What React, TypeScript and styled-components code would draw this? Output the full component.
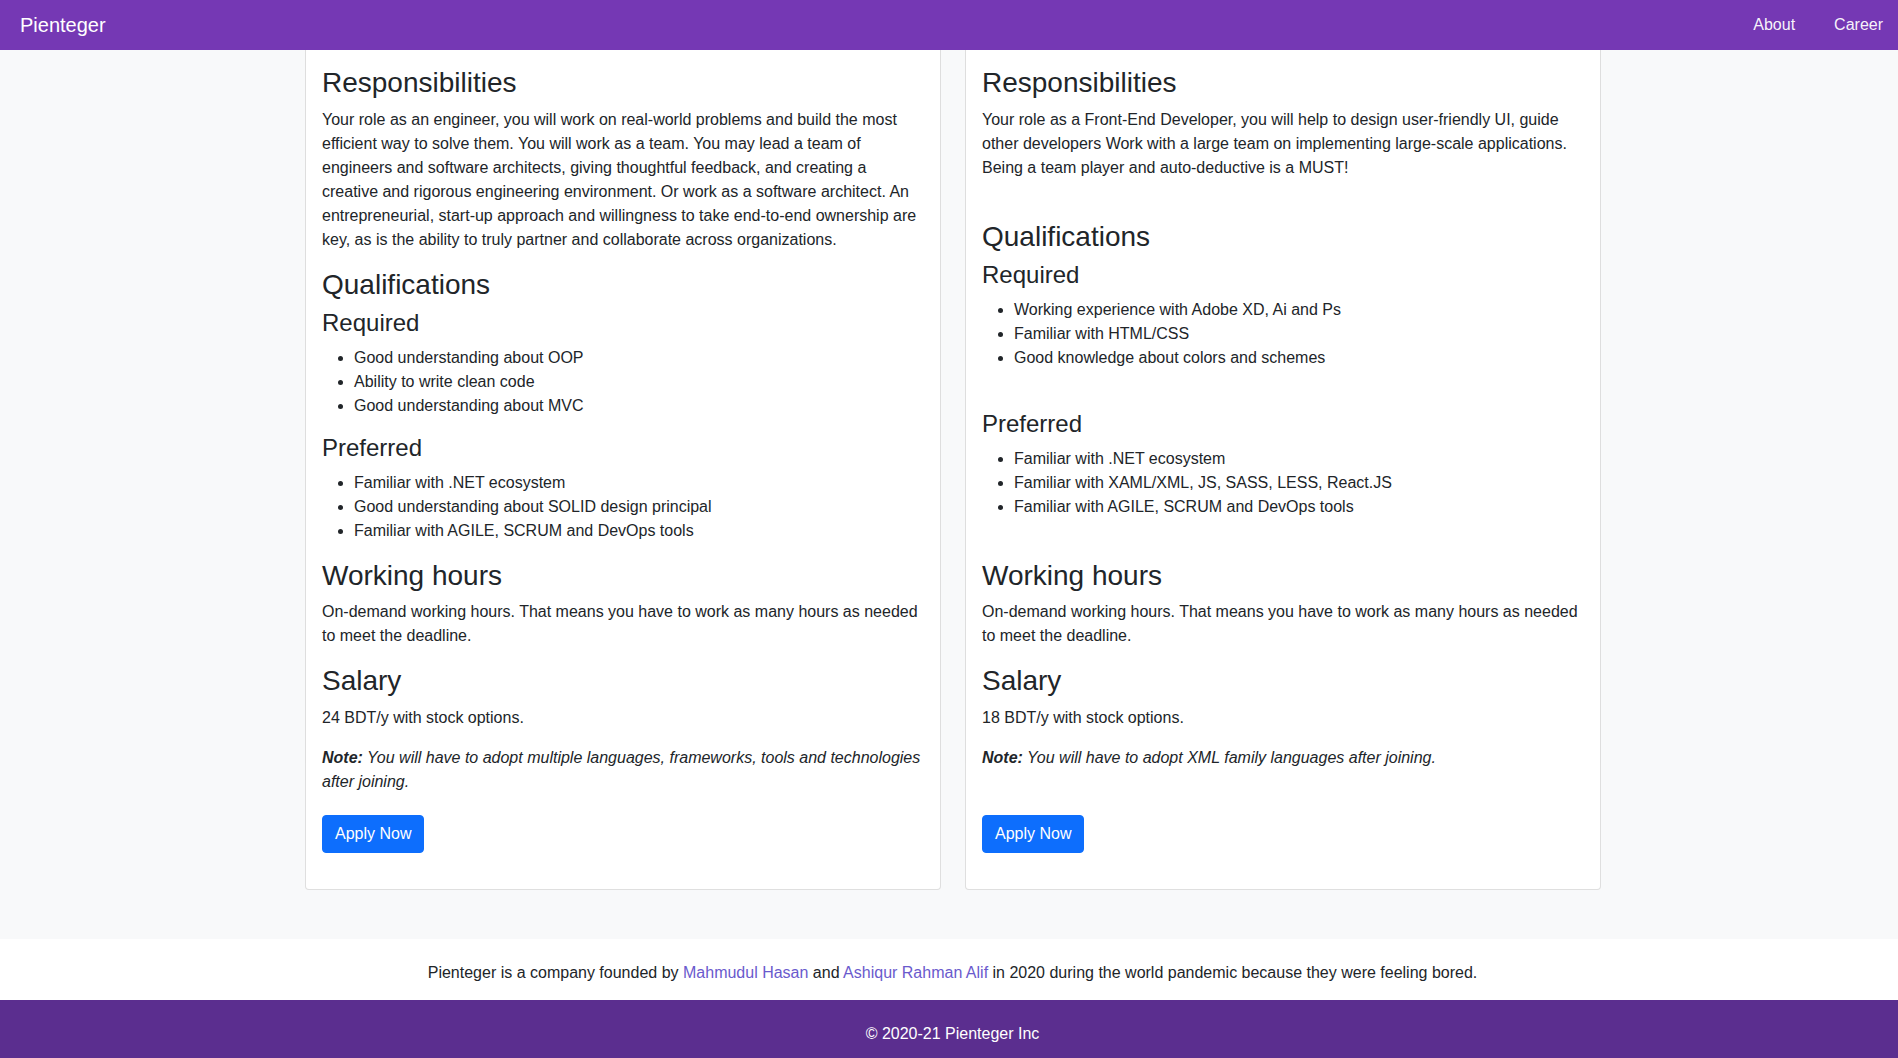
import React from "react";
import styled, { createGlobalStyle } from "styled-components";

const GlobalStyle = createGlobalStyle`
  *, *::before, *::after { box-sizing: border-box; }
  html, body { margin: 0; padding: 0; }
  body {
    font-family: "Liberation Sans", Arial, sans-serif;
    font-size: 16px;
    line-height: 1.5;
    color: #212529;
    background: #f8f9fa;
  }
`;

const Page = styled.div`
  display: flex;
  flex-direction: column;
  min-height: 100vh;
`;

const Navbar = styled.nav`
  height: 50px;
  background: #7538b4;
  display: flex;
  align-items: center;
  justify-content: space-between;
  padding: 0 15px 0 20px;
`;

const Brand = styled.a`
  color: #ffffff;
  font-size: 20px;
  line-height: 30px;
  text-decoration: none;
`;

const NavLinks = styled.div`
  display: flex;
  gap: 39px;
`;

const NavLink = styled.a`
  color: rgba(255, 255, 255, 0.96);
  font-size: 16px;
  line-height: 24px;
  text-decoration: none;
`;

const Main = styled.main`
  padding: 0 0 49px 8px;
  flex: 1;
`;

const CardGrid = styled.div`
  display: grid;
  grid-template-columns: 636px 636px;
  gap: 24px;
  justify-content: center;
  align-items: start;
`;

const Card = styled.section`
  background: #ffffff;
  border: 1px solid rgba(0, 0, 0, 0.125);
  border-top-width: 0;
  border-radius: 0 0 4px 4px;
  padding: 16px;
`;

const SectionTitle = styled.h3`
  font-size: 28px;
  font-weight: 400;
  line-height: 1.2;
  margin: 0 0 8px;
`;

const SubTitle = styled.h4`
  font-size: 24px;
  font-weight: 400;
  line-height: 1.2;
  margin: 0 0 8px;
`;

const Text = styled.p`
  margin: 0 0 16px;
  line-height: 24px;
`;

const Note = styled(Text)`
  font-style: italic;
`;

const List = styled.ul`
  margin: 0 0 16px;
  padding-left: 32px;
  line-height: 24px;
`;

const Spacer = styled.div<{ $h: number }>`
  height: ${(p) => p.$h}px;
`;

const ButtonRow = styled.div`
  display: flex;
  padding: 5px 0 20px;
`;

const ApplyButton = styled.button`
  font-family: inherit;
  font-size: 16px;
  line-height: 24px;
  color: #ffffff;
  background: #0d6efd;
  border: 1px solid #0d6efd;
  border-radius: 4px;
  padding: 6px 12px;
  cursor: pointer;
`;

const About = styled.div`
  background: #ffffff;
  text-align: center;
  padding: 22px 0 15px 7px;
  line-height: 24px;
`;

const PersonLink = styled.a`
  color: #6a5acd;
  text-decoration: none;
`;

const Copyright = styled.footer`
  background: #5b2e8f;
  color: #ffffff;
  text-align: center;
  padding: 22px 0 12px 7px;
  line-height: 24px;
`;

type Job = {
  responsibilities: string;
  required: string[];
  preferred: string[];
  salary: string;
  note: string;
  gaps: { afterResp: number; afterRequired: number; afterPreferred: number; afterNote: number };
};

const hours =
  "On-demand working hours. That means you have to work as many hours as needed to meet the deadline.";

const jobs: Job[] = [
  {
    responsibilities:
      "Your role as an engineer, you will work on real-world problems and build the most efficient way to solve them. You will work as a team. You may lead a team of engineers and software architects, giving thoughtful feedback, and creating a creative and rigorous engineering environment. Or work as a software architect. An entrepreneurial, start-up approach and willingness to take end-to-end ownership are key, as is the ability to truly partner and collaborate across organizations.",
    required: ["Good understanding about OOP", "Ability to write clean code", "Good understanding about MVC"],
    preferred: [
      "Familiar with .NET ecosystem",
      "Good understanding about SOLID design principal",
      "Familiar with AGILE, SCRUM and DevOps tools",
    ],
    salary: "24 BDT/y with stock options.",
    note: "You will have to adopt multiple languages, frameworks, tools and technologies after joining.",
    gaps: { afterResp: 0, afterRequired: 0, afterPreferred: 0, afterNote: 0 },
  },
  {
    responsibilities:
      "Your role as a Front-End Developer, you will help to design user-friendly UI, guide other developers Work with a large team on implementing large-scale applications. Being a team player and auto-deductive is a\u00a0MUST!",
    required: [
      "Working experience with Adobe XD, Ai and Ps",
      "Familiar with HTML/CSS",
      "Good knowledge about colors and schemes",
    ],
    preferred: [
      "Familiar with .NET ecosystem",
      "Familiar with XAML/XML, JS, SASS, LESS, React.JS",
      "Familiar with AGILE, SCRUM and DevOps tools",
    ],
    salary: "18 BDT/y with stock options.",
    note: "You will have to adopt XML family languages after joining.",
    gaps: { afterResp: 24, afterRequired: 24, afterPreferred: 24, afterNote: 24 },
  },
];

function JobCard({ job }: { job: Job }) {
  return (
    <Card>
      <SectionTitle>Responsibilities</SectionTitle>
      <Text>{job.responsibilities}</Text>
      {job.gaps.afterResp > 0 && <Spacer $h={job.gaps.afterResp} />}
      <SectionTitle>Qualifications</SectionTitle>
      <SubTitle>Required</SubTitle>
      <List>
        {job.required.map((r) => (
          <li key={r}>{r}</li>
        ))}
      </List>
      {job.gaps.afterRequired > 0 && <Spacer $h={job.gaps.afterRequired} />}
      <SubTitle>Preferred</SubTitle>
      <List>
        {job.preferred.map((r) => (
          <li key={r}>{r}</li>
        ))}
      </List>
      {job.gaps.afterPreferred > 0 && <Spacer $h={job.gaps.afterPreferred} />}
      <SectionTitle>Working hours</SectionTitle>
      <Text>{hours}</Text>
      <SectionTitle>Salary</SectionTitle>
      <Text>{job.salary}</Text>
      <Note>
        <strong>Note:</strong> {job.note}
      </Note>
      {job.gaps.afterNote > 0 && <Spacer $h={job.gaps.afterNote} />}
      <ButtonRow>
        <ApplyButton type="button">Apply Now</ApplyButton>
      </ButtonRow>
    </Card>
  );
}

export default function App() {
  return (
    <Page>
      <GlobalStyle />
      <Navbar>
        <Brand href="#">Pienteger</Brand>
        <NavLinks>
          <NavLink href="#">About</NavLink>
          <NavLink href="#">Career</NavLink>
        </NavLinks>
      </Navbar>
      <Main>
        <CardGrid>
          {jobs.map((job, i) => (
            <JobCard key={i} job={job} />
          ))}
        </CardGrid>
      </Main>
      <About>
        Pienteger is a company founded by <PersonLink href="#">Mahmudul Hasan</PersonLink> and{" "}
        <PersonLink href="#">Ashiqur Rahman Alif</PersonLink> in 2020 during the world pandemic because they were
        feeling bored.
      </About>
      <Copyright>© 2020-21 Pienteger Inc</Copyright>
    </Page>
  );
}
